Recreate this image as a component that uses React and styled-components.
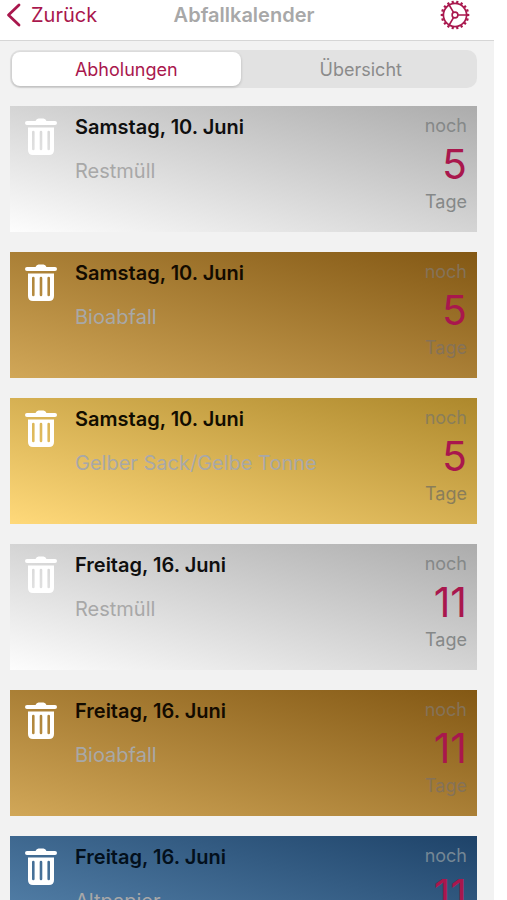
import React, { useState } from "react";
import styled, { createGlobalStyle } from "styled-components";

const GlobalStyle = createGlobalStyle`
  *, *::before, *::after { box-sizing: border-box; }
  body {
    margin: 0;
    background: #ffffff;
    font-family: Inter, "Liberation Sans", sans-serif;
  }
`;

const accent = "#a9174d";

const Screen = styled.div`
  display: flex;
  flex-direction: column;
  height: 100vh;
  margin-right: 13px;
  overflow: hidden;
  background: #f2f2f2;
`;

const Header = styled.header`
  display: grid;
  grid-template-columns: 1fr auto 1fr;
  align-items: center;
  flex: none;
  height: 41px;
  padding: 0 24px 14px 6px;
  background: #ffffff;
  border-bottom: 1px solid #d6d6d6;
`;

const BackLink = styled.a`
  display: flex;
  align-items: center;
  gap: 10px;
  justify-self: start;
  color: ${accent};
  font-size: 20px;
  line-height: 28px;
  text-decoration: none;
`;

const Title = styled.h1`
  margin: 0 0 0 12px;
  color: #a8a8a8;
  font-size: 20px;
  font-weight: 600;
  line-height: 28px;
`;

const IconButton = styled.button`
  display: flex;
  justify-self: end;
  padding: 0;
  border: 0;
  background: none;
  color: ${accent};
  cursor: pointer;
`;

const Segments = styled.div`
  display: grid;
  grid-template-columns: 1fr 1fr;
  gap: 6px;
  flex: none;
  margin: 9px 17px 18px 10px;
  padding: 2px;
  border-radius: 10px;
  background: #e2e2e2;
`;

const Segment = styled.button`
  height: 34px;
  padding: 0;
  border: 0;
  border-radius: 8px;
  background: ${(p) => (p.$active ? "#ffffff" : "transparent")};
  box-shadow: ${(p) => (p.$active ? "0 1px 3px rgba(0, 0, 0, 0.2)" : "none")};
  color: ${(p) => (p.$active ? accent : "#8b8b8b")};
  font-family: inherit;
  font-size: 18px;
  cursor: pointer;
`;

const List = styled.ul`
  display: flex;
  flex-direction: column;
  flex: 1;
  gap: 20px;
  min-height: 0;
  margin: 0;
  padding: 0 17px 20px 10px;
  overflow-y: auto;
  scrollbar-width: none;
  list-style: none;
`;

const Card = styled.li`
  display: flex;
  flex: none;
  min-height: 126px;
  padding: 7px 10px 16px 15px;
  background: linear-gradient(to top right, ${(p) => p.$from}, ${(p) => p.$to});
`;

const TrashSvg = styled.svg`
  flex: none;
  margin-top: 5px;
`;

const Details = styled.div`
  flex: 1;
  min-width: 0;
  padding-left: 18px;
`;

const Day = styled.h2`
  margin: 0 0 16px;
  color: ${(p) => p.$color};
  font-size: 20px;
  font-weight: 600;
  line-height: 28px;
`;

const Kind = styled.p`
  margin: 0;
  color: #a8a8a8;
  font-size: 20px;
  line-height: 28px;
`;

const Countdown = styled.div`
  display: flex;
  flex-direction: column;
  align-items: flex-end;
  color: ${(p) => p.$color};
  font-size: 18px;
  line-height: 26px;
`;

const Count = styled.strong`
  color: ${accent};
  font-size: 41px;
  font-weight: 400;
  line-height: 50px;
`;

const bins = {
  rest: { name: "Restmüll", from: "#fdfdfd", to: "#acacac", day: "#0f0f0f", note: "#858888" },
  bio: { name: "Bioabfall", from: "#d1a758", to: "#835814", day: "#130b00", note: "#857258" },
  gelb: { name: "Gelber Sack/Gelbe Tonne", from: "#ffd97a", to: "#ad882c", day: "#120d00", note: "#8a7e5a" },
  papier: { name: "Altpapier", from: "#5f8db6", to: "#1e4369", day: "#03101c", note: "#748795" },
};

const pickups = [
  { day: "Samstag, 10. Juni", bin: "rest", days: 5 },
  { day: "Samstag, 10. Juni", bin: "bio", days: 5 },
  { day: "Samstag, 10. Juni", bin: "gelb", days: 5 },
  { day: "Freitag, 16. Juni", bin: "rest", days: 11 },
  { day: "Freitag, 16. Juni", bin: "bio", days: 11 },
  { day: "Freitag, 16. Juni", bin: "papier", days: 11 },
];

const ChevronIcon = () => (
  <svg width="15" height="24" viewBox="0 0 15 24" fill="none" aria-hidden="true">
    <path d="M13 2 2.5 12 13 22" stroke="currentColor" strokeWidth="2.8" strokeLinecap="round" strokeLinejoin="round" />
  </svg>
);

const GearIcon = () => (
  <svg width="30" height="30" viewBox="-15 -15 30 30" fill="none" stroke="currentColor" aria-hidden="true">
    <circle r="11.6" strokeWidth="1.7" />
    <circle r="2.9" strokeWidth="1.6" />
    <path d="M3 0H11.5M-1.5 -2.6-5.8 -10M-1.5 2.6-5.8 10" strokeWidth="1.6" />
    {Array.from({ length: 18 }, (_, i) => (
      <path key={i} d="M12 0H14.3" strokeWidth="2.2" transform={`rotate(${i * 20})`} />
    ))}
  </svg>
);

const TrashIcon = () => (
  <TrashSvg width="32" height="37" viewBox="0 0 32 37" fill="#ffffff" aria-hidden="true">
    <path d="M2 3H10.5Q11.5 .5 13.5 .5H18.5Q20.5 .5 21.5 3H30A2 2 0 0 1 30 7H2A2 2 0 0 1 2 3Z" />
    <path
      fillRule="evenodd"
      d="M3 9.5H29V32Q29 37 24 37H8Q3 37 3 32ZM7 14V31A1.3 1.3 0 0 0 9.6 31V14A1.3 1.3 0 0 0 7 14ZM14.7 14V31A1.3 1.3 0 0 0 17.3 31V14A1.3 1.3 0 0 0 14.7 14ZM22.4 14V31A1.3 1.3 0 0 0 25 31V14A1.3 1.3 0 0 0 22.4 14Z"
    />
  </TrashSvg>
);

export default function App() {
  const [tab, setTab] = useState("Abholungen");
  return (
    <>
      <GlobalStyle />
      <Screen>
        <Header>
          <BackLink href="#zurueck">
            <ChevronIcon />
            Zurück
          </BackLink>
          <Title>Abfallkalender</Title>
          <IconButton type="button" aria-label="Einstellungen">
            <GearIcon />
          </IconButton>
        </Header>
        <Segments>
          {["Abholungen", "Übersicht"].map((name) => (
            <Segment
              key={name}
              type="button"
              aria-pressed={tab === name}
              $active={tab === name}
              onClick={() => setTab(name)}
            >
              {name}
            </Segment>
          ))}
        </Segments>
        <List>
          {pickups.map((pickup, i) => {
            const bin = bins[pickup.bin];
            return (
              <Card key={i} $from={bin.from} $to={bin.to}>
                <TrashIcon />
                <Details>
                  <Day $color={bin.day}>{pickup.day}</Day>
                  <Kind>{bin.name}</Kind>
                </Details>
                <Countdown $color={bin.note}>
                  <span>noch</span>
                  <Count>{pickup.days}</Count>
                  <span>Tage</span>
                </Countdown>
              </Card>
            );
          })}
        </List>
      </Screen>
    </>
  );
}
